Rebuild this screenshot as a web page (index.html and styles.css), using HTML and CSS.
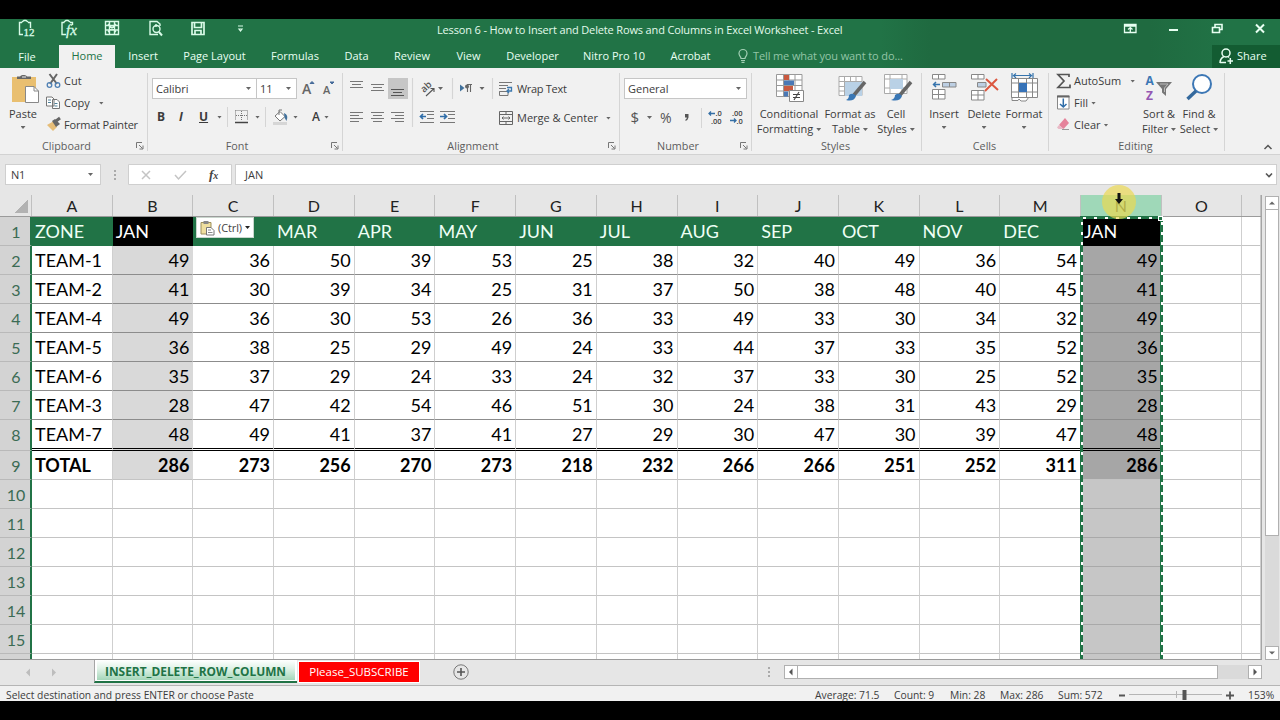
FILE: index.html
```html
<!DOCTYPE html>
<html lang="en">
<head>
<meta charset="utf-8">
<title>Lesson 6 - How to Insert and Delete Rows and Columns in Excel Worksheet - Excel</title>
<link rel="stylesheet" href="styles.css">
</head>
<body>
<div class="app">
  <header class="titlebar">
    <svg class="quick" viewBox="0 19 260 26" width="260" height="26" fill="none" stroke="#d9fbe8" stroke-width="1.4">
      <path d="M22 22.5H19.5V34.5H23M28 22.500H30.500V28M22 22L24 20.500H26L28 22"/>
      <text x="23.500" y="36" class="glyph">12</text>
      <path d="M64.500 22.500H62V34.500H66M70 22.500H72.500V25M64 22L66 20.500H68L70 22"/>
      <text x="66" y="34.500" class="glyph fx">fx</text>
      <path d="M105.500 21.500H118.500V34.500H105.500ZM105 25.500H119M105 30H119M109.500 21V35M114.500 21V35M108 24L116 32M116 24L108 32"/>
      <path d="M158 34.500H150V21.500H157L160 24V26M156 24V27"/><circle cx="156.500" cy="29" r="3.500"/><path d="M159 32L162 35.500" stroke-width="2"/>
      <path d="M192 22.500H204V34.500H192ZM194.500 23V27.500H201.500V23M195 34V30.500H201V34" stroke-width="1.700"/>
      <path d="M238 26H243M239 29H242L240.500 31Z" stroke-width="1.200"/>
    </svg>
    <div class="title"><span>Lesson 6 - How to Insert and Delete Rows and Columns in Excel Worksheet - Excel</span></div>
    <svg class="winctl" viewBox="1110 19 170 26" width="170" height="26" fill="none" stroke="#e8fff2" stroke-width="1.300">
      <path d="M1124.500 24.500H1136V32.500H1124.500ZM1124 26H1136M1130.300 32V27.500M1128 29.500L1130.300 27.500L1132.500 29.500"/>
      <path d="M1169 30H1178" stroke-width="2"/>
      <path d="M1212.500 27.500H1219.500V32.500H1212.500ZM1215 27V24.500H1222V29.500H1220" stroke-width="1.600"/>
      <path d="M1256 24.500L1264 32.500M1264 24.500L1256 32.500" stroke-width="2"/>
    </svg>
  </header>
  <nav class="tabs">
    <span class="tab t-file">File</span><span class="tab t-home">Home</span><span class="tab t-insert">Insert</span><span class="tab t-page">Page Layout</span><span class="tab t-formulas">Formulas</span><span class="tab t-data">Data</span><span class="tab t-review">Review</span><span class="tab t-view">View</span><span class="tab t-dev">Developer</span><span class="tab t-nitro">Nitro Pro 10</span><span class="tab t-acro">Acrobat</span>
    <span class="tell"><svg viewBox="736 48 14 16" width="14" height="16" fill="none" stroke="#a3d0b5" stroke-width="1.200"><path d="M741 58.500C741 56.500 739 56 739 53.500A4 4 0 0 1 747 53.500C747 56 745 56.500 745 58.500ZM741 60.500H745M741.500 62.300H744.500"/></svg><span>Tell me what you want to do...</span></span>
    <span class="share"><svg viewBox="1218 47 18 18" width="18" height="18" fill="none" stroke="#e8fff2" stroke-width="1.500"><circle cx="1226" cy="53" r="4"/><path d="M1220 63C1220 59.500 1222 57.500 1224 56.500M1228 56.500L1229 57.500M1220 62.500H1226M1227.500 61H1233M1230.300 58V64"/></svg><span>Share</span></span>
  </nav>

  <section class="ribbon">
    <div class="group g-clip">
      <div class="body clip">
        <div class="big"><svg viewBox="0 70 46 35" width="46" height="35"><path d="M12 77H36V102H12Z" fill="#e9bf70"/><path d="M17 79V76.500H20Q21 74.500 23.500 75Q26 74.500 27 76.500H31V79Z" fill="#666"/><path d="M22 77H26" stroke="#eee"/><path d="M25.500 86.500H34L38.500 91V102.500H25.500Z" fill="#fff" stroke="#888"/><path d="M34 86.500V91H38.500" fill="none" stroke="#888"/></svg><span>Paste</span><i class="caret"></i></div>
        <div class="stack">
          <div class="row"><svg viewBox="46 72 16 18" width="16" height="18" fill="none"><path d="M49.500 74L57 84M57 74L50 84" stroke="#666" stroke-width="2"/><circle cx="49.500" cy="85" r="2.300" stroke="#4f81b5" stroke-width="1.300"/><circle cx="57.500" cy="85" r="2.300" stroke="#4f81b5" stroke-width="1.300"/></svg><span>Cut</span></div>
          <div class="row"><svg viewBox="46 94 16 18" width="16" height="18" fill="#fff" stroke="#777"><path d="M46.500 97H52L54 99V106H46.500ZM52.500 99.500H57L59.500 102V108.500H52.500Z"/><path d="M48 100H51M48 102.500H51M54.500 103.500H57.500M54.500 106H57.500" stroke="#4f8199"/></svg><span>Copy</span><i class="caret ml12"></i></div>
          <div class="row"><svg viewBox="46 116 16 18" width="16" height="18"><path d="M47 125L53 121.500L57 127L53 131Z" fill="#e6bd78"/><path d="M52 121L55 119L60 124L56 127Z" fill="#666"/><path d="M56 121L60 118" stroke="#666" stroke-width="3"/></svg><span class="w-fp">Format Painter</span></div>
        </div>
      </div>
      <div class="label"><span class="l-clip">Clipboard</span><svg class="launch" viewBox="0 0 8 8" width="8" height="8"><path d="M.5 6V.5H6M3 3L6.500 6.500M7 3.500V7H3.500" fill="none" stroke="#777"/></svg></div>
    </div>

    <div class="group g-font">
      <div class="body">
        <div class="fontrow1"><div class="combo"><span>Calibri</span><i class="caret"></i></div><div class="combo size"><span>11</span><i class="caret"></i></div><svg viewBox="297 78 46 20" width="46" height="20"><text x="302" y="94" class="bigA">A</text><path d="M310 83.500L312 81.500L314 83.500Z" fill="#456a99" stroke="#456a99"/><text x="323" y="94" class="smA">A</text><path d="M330 82L332 84L334 82Z" fill="#456a99" stroke="#456a99"/></svg></div>
        <div class="fontrow2"><b>B</b><b class="it">I</b><b class="un">U</b><i class="caret"></i><i class="vsep"></i>
          <svg viewBox="236 109 16 18" width="16" height="18" fill="none" stroke="#777"><path d="M237.500 111.500H249.500V121M237.500 111.500V121M243.500 112V121M238 116.500H249" stroke-dasharray="1 1"/><path d="M237 123.500H250" stroke="#444" stroke-width="1.500"/></svg><i class="caret"></i><i class="vsep"></i>
          <svg viewBox="276 108 17 18" width="17" height="18"><path d="M279 116L284 111.500L289 116.500L284 121Z" fill="#fff" stroke="#777"/><path d="M283 115V110H286" fill="none" stroke="#777"/><path d="M288 113Q293 115 290.500 121Q288 118 288 113" fill="#41719c"/><path d="M277 123.500H291" stroke="#d6d6d6" stroke-width="3"/></svg><i class="caret"></i><span class="fa">A</span><i class="caret"></i></div>
      </div>
      <div class="label"><span class="l-font">Font</span><svg class="launch" viewBox="0 0 8 8" width="8" height="8"><path d="M.5 6V.5H6M3 3L6.500 6.500M7 3.500V7H3.500" fill="none" stroke="#777"/></svg></div>
    </div>

    <div class="group g-align">
      <div class="body">
        <div class="alignrow">
          <svg viewBox="343 76 172 54" width="172" height="54" fill="none" stroke="#777" stroke-width="1.100">
            <rect x="388" y="78" width="20" height="21" fill="#c6c6c6" stroke="none"/>
            <path d="M350 81.500H363M352 84.500H361M350 87.500H363M371 84.500H384M373 87.500H382M371 90.500H384"/><path d="M391 89.500H404M393 92.500H402M391 95.500H404" stroke="#555"/>
            <path d="M350 112.500H363M350 115.500H359M350 118.500H363M350 121.500H359M371 112.500H384M373 115.500H382M371 118.500H384M373 121.500H382M391 112.500H404M395 115.500H404M391 118.500H404M395 121.500H404"/>
            <path d="M412.500 78V127M452.500 78V99M492.500 78V99" stroke="#d5d5d5"/>
            <text x="0" y="0" class="ab" transform="translate(424 93) rotate(-42)">ab</text><path d="M426 96L434 88.500M430.500 88.500H434V92" stroke="#555"/>
            <path d="M460 84.500L464.500 88L460 91.500Z" fill="#41719c" stroke="none"/><path d="M467 84.500H472M467.500 92V84.500M470.500 92V84.500" stroke="#666"/><circle cx="467" cy="86.500" r="2" fill="#666" stroke="none"/>
            <path d="M438 87H443L440.500 90ZM479.500 87H484.500L482 90Z" fill="#666" stroke="none"/>
            <path d="M420 111.500H434M427 114.500H434M427 118.500H434M420 122.500H434M440 111.500H455M448 114.500H455M448 118.500H455M440 122.500H455"/>
            <path d="M426 116.500H420M423 114L420.500 116.500L423 119M440 116.500H446.500M444 114L446.500 116.500L444 119" stroke="#2f6da8" stroke-width="1.700"/>
          </svg>
          <div class="wrapcol">
            <div class="row2"><svg viewBox="498 79 16 18" width="16" height="18" fill="none" stroke="#777"><path d="M499 81.500H512M499 84.500H508M499 87.500H506M499.500 90.500H505M499.500 94.500H508V90.500H499.500Z"/><path d="M507 86.500H511.500V90H507M509 88L507 90L509 92" stroke="#3c78ae" stroke-width="1.300"/></svg><span class="w-wrap">Wrap Text</span></div>
            <div class="row2"><svg viewBox="498 108 16 18" width="16" height="18" fill="none" stroke="#666"><path d="M499.500 110.500H512.500V123.500H499.500ZM499 113.500H513M499 120.500H513M506 110V113M506 120V124M502 117H510M503.500 115.500L502 117L503.500 118.500M508.500 115.500L510 117L508.500 118.500"/></svg><span>Merge &amp; Center</span><i class="caret ml6"></i></div>
          </div>
        </div>
      </div>
      <div class="label"><span class="l-align">Alignment</span><svg class="launch" viewBox="0 0 8 8" width="8" height="8"><path d="M.5 6V.5H6M3 3L6.500 6.500M7 3.500V7H3.500" fill="none" stroke="#777"/></svg></div>
    </div>

    <div class="group g-num">
      <div class="body">
        <div class="combo general"><span>General</span><i class="caret"></i></div>
        <svg class="numrow" viewBox="620 106 130 24" width="130" height="24"><text x="630.500" y="123" class="sym">$</text><path d="M647 116H652L649.500 119Z" fill="#666"/><text x="660" y="123" class="sym pc">%</text><path d="M685 114H688.500V117.500Q688 120 685.500 121V119.500Q687 119 686.800 117.500H685Z" fill="#555"/><path d="M701.500 108V128" stroke="#d5d5d5"/><text x="715.500" y="115.500" class="dec">.0</text><text x="711" y="123.500" class="dec">.00</text><text x="732" y="115.500" class="dec">.00</text><text x="736.500" y="123.500" class="dec">.0</text><path d="M715 113.500H709M711 111.500L709 113.500L711 115.500M730 120.500H736M734 118.500L736 120.500L734 122.500" fill="none" stroke="#356fa5" stroke-width="1.300"/></svg>
      </div>
      <div class="label"><span class="l-num">Number</span><svg class="launch" viewBox="0 0 8 8" width="8" height="8"><path d="M.5 6V.5H6M3 3L6.500 6.500M7 3.500V7H3.500" fill="none" stroke="#777"/></svg></div>
    </div>

    <div class="group g-styles">
      <div class="body bigs">
        <div class="big w74"><svg viewBox="769 71 40 34" width="40" height="34"><path d="M776.500 75.500H802V97.500H776.500ZM776 81H802M776 86.500H802M776 92H802M783.500 75V98M789 75V98M795 75V98" fill="#fff" stroke="#999"/><path d="M784 76H789V81H784ZM784 87H793V92H784Z" fill="#c9593f"/><path d="M784 81.500H794V86H784ZM784 92.500H788V97.500H784Z" fill="#4a78b5"/><path d="M789.500 91.500H803.500V102.500H789.500Z" fill="#fff" stroke="#888"/><path d="M793 95.500H800M793 98.500H800M799 93L794 101" stroke="#444" stroke-width="1.100"/></svg><span>Conditional</span><span class="two">Formatting<i class="caret"></i></span></div>
        <div class="big w48"><svg viewBox="829 71 40 34" width="40" height="34"><path d="M838 77.500H861V96.500H838ZM838 82.500H861M838 87.500H861M838 92H861M843.500 77V97M849.500 77V97M855 77V97" fill="#fff" stroke="#aaa"/><path d="M844 83H861V97H844Z" fill="#b9d1e6"/><path d="M864 83L853 96" stroke="#666" stroke-width="3.500"/><path d="M845 101Q848 100 848 96Q852 93 855 97Q853 103 845 101" fill="#3977b5"/></svg><span>Format as</span><span class="two">Table<i class="caret"></i></span></div>
        <div class="big w44"><svg viewBox="876 71 40 34" width="40" height="34"><path d="M884.500 75.500H907V94.500H884.500ZM884 80H907M884 89H907M890 75V95M902 75V95" fill="#fff" stroke="#aaa"/><path d="M890 80H903V90H890Z" fill="#b9d1e6"/><path d="M911 83L900 96" stroke="#666" stroke-width="3.500"/><path d="M891 101Q895 100 895 96Q899 93 902 97Q900 103 891 101" fill="#3977b5"/></svg><span>Cell</span><span class="two">Styles<i class="caret"></i></span></div>
      </div>
      <div class="label"><span class="l-styles">Styles</span></div>
    </div>

    <div class="group g-cells">
      <div class="body bigs">
        <div class="big w44"><svg viewBox="925 71 40 34" width="40" height="34" fill="#fff" stroke="#888"><path d="M933.500 75.500H946V80H933.500ZM939.500 75V80M933.500 90.500H946V100H933.500ZM933.500 95.500H946M939.500 90V100"/><path d="M943.500 83.500H957V88H943.500ZM950.500 83V88" fill="#bdcfe3"/><path d="M941 85.500H934.500M937 83L934.500 85.500L937 88" fill="none" stroke="#3674ad" stroke-width="1.500"/></svg><span>Insert</span><i class="caret"></i></div>
        <div class="big w36"><svg viewBox="964 71 40 34" width="40" height="34" fill="#fff" stroke="#888"><path d="M971.500 75.500H984V80H971.500ZM978 75V80M971.500 91.500H984V101H971.500ZM971.500 96H984M978 91V101"/><path d="M977.500 83.500H986V88H977.500Z" fill="#bdcfe3"/><path d="M986 80L998 91M997 80L985 92" stroke="#dc5740" stroke-width="2"/></svg><span>Delete</span><i class="caret"></i></div>
        <div class="big w44"><svg viewBox="1003 71 40 34" width="40" height="34" fill="#fff" stroke="#888"><path d="M1010.500 79.500H1036.500V98.500H1010.500ZM1010 84H1037M1010 93H1037M1017.500 79V99M1025.500 79V99M1031.500 79V99M1011 98V101.500H1017L1018 100L1020 102H1025L1028 98"/><path d="M1018 84H1026V93H1018Z" fill="#3773b8" stroke="none"/><path d="M1011 74V79M1032 74V79M1012.500 76.500H1030.500M1015 74.500L1012.500 76.500L1015 79M1028 74.500L1030.500 76.500L1028 79" fill="none" stroke="#3674ad" stroke-width="1.200"/></svg><span>Format</span><i class="caret"></i></div>
      </div>
      <div class="label"><span class="l-cells">Cells</span></div>
    </div>

    <div class="group g-edit">
      <div class="body editing">
        <div class="stack">
          <div class="row"><svg viewBox="1056 72 16 18" width="16" height="18"><path d="M1069 77V74.500H1058L1064 81L1058 87.500H1070V84.500" fill="none" stroke="#555" stroke-width="1.700"/></svg><span>AutoSum</span><i class="caret ml9"></i></div>
          <div class="row"><svg viewBox="1056 94 16 18" width="16" height="18"><path d="M1057.500 96H1069V109H1057.500Z" fill="#fff" stroke="#888"/><path d="M1057 96.500H1069.500" stroke="#666" stroke-width="2"/><path d="M1063.300 98.500V107M1060 104L1063.300 107L1066.500 104" fill="none" stroke="#2f6da8" stroke-width="1.500"/></svg><span>Fill</span><i class="caret ml3"></i></div>
          <div class="row"><svg viewBox="1056 116 16 18" width="16" height="18"><path d="M1059 125L1065 118L1069 123L1063.500 129Z" fill="#e5839b"/><path d="M1059 125L1063.500 129H1058.500L1057 127.500Z" fill="#e9b9c6"/><path d="M1062 129.500H1069" stroke="#999"/></svg><span>Clear</span><i class="caret ml3"></i></div>
        </div>
        <div class="big w40"><svg viewBox="1139 71 40 34" width="40" height="34"><text x="1145.500" y="86" class="az az-a">A</text><text x="1146" y="100.500" class="az az-z">Z</text><path d="M1156 83H1172L1166 90V97L1162 93.500V90Z" fill="#777"/><path d="M1160 85H1168L1164.500 89V93" fill="none" stroke="#bbb"/></svg><span>Sort &amp;</span><span class="two">Filter<i class="caret"></i></span></div>
        <div class="big w40"><svg viewBox="1179 71 40 34" width="40" height="34"><circle cx="1202" cy="85" r="9" fill="#fff" stroke="#3c77b5" stroke-width="2"/><path d="M1196 92L1187.500 100" stroke="#34699d" stroke-width="3.500"/></svg><span>Find &amp;</span><span class="two">Select<i class="caret"></i></span></div>
      </div>
      <div class="label"><span class="l-edit">Editing</span></div>
    </div>
    <div class="collapse"><svg viewBox="0 0 10 8" width="10" height="8"><path d="M1.500 6L5 2.500L8.500 6" fill="none" stroke="#555" stroke-width="1.500"/></svg></div>
  </section>

  <section class="formula">
    <div class="namebox"><span>N1</span><i class="caret"></i></div>
    <svg class="dots" viewBox="0 0 4 14" width="4" height="14" fill="#aaa"><path d="M1 2h2v2H1zM1 6h2v2H1zM1 10h2v2H1z"/></svg>
    <svg class="fxbox" viewBox="128 164 104 21" width="104" height="21"><path d="M128.500 164.500H231.500V184.500H128.500Z" fill="#fff" stroke="#cfcfcf"/><path d="M142 171L150 179M150 171L142 179M175 175L178.500 179L186 171" fill="none" stroke="#c4c4c4" stroke-width="1.500"/><text x="209" y="179" class="fxt">f<tspan class="fxs">x</tspan></text></svg>
    <div class="input"><span>JAN</span><svg viewBox="0 0 8 6" width="8" height="6"><path d="M1 1.500L4 4.500L7 1.500" fill="none" stroke="#555" stroke-width="1.600"/></svg></div>
  </section>

  <main class="sheetarea">
    <div class="sheet" id="sheet">
      <div class="edge left"></div><div class="edge right"></div><div class="edge top"></div><div class="handle"></div>
      <div class="paste"><svg viewBox="0 0 15 16" width="15" height="16"><path d="M1 2.500H11V14H1Z" fill="#efdf9f" stroke="#9c8f5c"/><path d="M3.500 1H8.500V4H3.500Z" fill="#888"/><path d="M6.500 7.500H11L14 10.500V15H6.500Z" fill="#fff" stroke="#777"/><path d="M8 10H11M8 12.500H12.500" stroke="#888"/></svg><span>(Ctrl)</span><i class="caret dark"></i></div>
      <div class="halo"></div>
      <svg class="cursor" viewBox="0 0 10 13" width="10" height="13"><path d="M3.500 0H6.500V6H9L5 11L1 6H3.500Z" fill="#111"/></svg>
    </div>
    <div class="vscroll"><div class="sbtn"><svg viewBox="0 0 8 8" width="8" height="8"><path d="M1 5.500L4 2.500L7 5.500Z" fill="#666"/></svg></div><div class="vthumb"></div><div class="vtrack"></div><div class="sbtn"><svg viewBox="0 0 8 8" width="8" height="8"><path d="M1 2.500L4 5.500L7 2.500Z" fill="#666"/></svg></div></div>
  </main>

  <section class="sheetbar">
    <svg class="nav" viewBox="0 659 94 26" width="94" height="26" fill="#bdbdbd"><path d="M30 667.500V675.500L26 671.500ZM52 667.500V675.500L56 671.500Z"/></svg>
    <div class="stab active"><span>INSERT_DELETE_ROW_COLUMN</span></div>
    <div class="stab red"><span>Please_SUBSCRIBE</span></div>
    <svg class="add" viewBox="0 0 18 18" width="18" height="18" fill="none" stroke="#777"><circle cx="9" cy="9" r="7.200"/><path d="M5 9H13M9 5V13" stroke="#555" stroke-width="1.600"/></svg>
    <svg class="hdots" viewBox="0 0 4 14" width="4" height="14" fill="#aaa"><path d="M1 2h2v2H1zM1 6h2v2H1zM1 10h2v2H1z"/></svg>
    <div class="hscroll"><div class="sbtn"><svg viewBox="0 0 8 8" width="8" height="8"><path d="M5.500 .5L2 4L5.500 7.500Z" fill="#555"/></svg></div><div class="hthumb"></div><div class="htrack"></div><div class="sbtn"><svg viewBox="0 0 8 8" width="8" height="8"><path d="M2.500 .5L6 4L2.500 7.500Z" fill="#555"/></svg></div></div>
  </section>

  <footer class="status">
    <span class="s-msg">Select destination and press ENTER or choose Paste</span>
    <span class="s-avg">Average: 71.5</span><span class="s-count">Count: 9</span><span class="s-min">Min: 28</span><span class="s-max">Max: 286</span><span class="s-sum">Sum: 572</span>
    <svg viewBox="1115 686 122 15" width="122" height="15" fill="none"><path d="M1119 695.500H1125" stroke="#555" stroke-width="2"/><path d="M1129 694.500H1222M1176.500 691V698" stroke="#b5b5b5"/><path d="M1184.500 690V700" stroke="#555" stroke-width="4"/><path d="M1226 695.500H1234M1230 691.500V699.500" stroke="#555" stroke-width="1.800"/></svg>
    <span class="s-zoom">153%</span>
  </footer>
</div>
<script src="script.js"></script>
</body>
</html>
```
FILE: styles.css
```css
* { box-sizing: border-box; }
body { margin: 0; background: #000; font: 11px/16px "Open Sans", "Noto Sans", sans-serif; color: #3c3c3c; }
svg { display: block; flex: none; }
.app { width: 1280px; height: 720px; padding-top: 19px; overflow: hidden; white-space: nowrap; }

.titlebar { display: flex; height: 26px; background: linear-gradient(90deg, #217346 0 880px, #1f6a40 930px 1150px, #217346 1230px); }
.glyph { font: 11px "Liberation Serif", serif; fill: #d9fbe8; stroke: #d9fbe8; stroke-width: .3; }
.glyph.fx { font-size: 15px; font-style: italic; }
.title { width: 850px; padding: 3px 0 0 177px; color: #e3faec; letter-spacing: -.15px; }
.tabs { display: flex; height: 23px; background: linear-gradient(90deg, #217346 0 880px, #1f6a40 930px 1150px, #217346 1230px); color: #e8fff2; line-height: 22px; }
.tab { flex: none; text-align: center; }
.t-file { width: 59px; padding-right: 5px; padding-top: 1px; }
.t-home { width: 56px; background: #f1f1f1; color: #217346; }
.t-insert { width: 56px; }
.t-page { width: 87px; }
.t-formulas { width: 74px; }
.t-data { width: 49px; }
.t-review { width: 62px; }
.t-view { width: 51px; }
.t-dev { width: 77px; }
.t-nitro { width: 86px; }
.t-acro { width: 67px; }
.tell { display: flex; gap: 3px; width: 488px; padding: 3px 0 0 12px; color: #93c5a6; line-height: 16px; letter-spacing: -.12px; }
.share { display: flex; gap: 1px; width: 68px; padding: 2px 0 0 6px; background: #135c32; line-height: 18px; }

.ribbon { display: flex; height: 87px; background: #f1f1f1; border-bottom: 1px solid #d2d2d2; }
.group { display: flex; flex-direction: column; flex: none; background: linear-gradient(#d5d5d5, #d5d5d5) right 5px / 1px 78px no-repeat; }
.g-clip { width: 148px; }
.g-font { width: 195px; }
.g-align { width: 277px; }
.g-num { width: 132px; }
.g-styles { width: 170px; }
.g-cells { width: 127px; }
.g-edit { width: 176px; }
.body { height: 69px; }
.label { display: flex; justify-content: center; align-items: center; position: relative; height: 17px; color: #5d5d5d; font-size: 10.800px; }
.launch { position: absolute; right: 4px; top: 5px; }
.l-clip { margin-right: 15px; }
.l-font, .l-align { margin-right: 17px; }
.l-num { margin-right: 16px; }
.l-styles { margin-right: 3px; }
.l-cells { margin-right: 2px; }
.l-edit { margin-right: 3px; }
.caret { display: inline-block; flex: none; width: 5px; height: 3px; background: #666; clip-path: polygon(0 0, 100% 0, 50% 100%); }
.dark { background: #222; }
.clip, .bigs, .editing { display: flex; }
.stack { padding-top: 2px; }
.row { display: flex; align-items: center; gap: 2px; height: 22px; }
.w-fp { letter-spacing: -.2px; }
.w-wrap { letter-spacing: -.3px; }
.ml12 { margin-left: 7px; }
.ml9 { margin-left: 7px; }
.ml6 { margin-left: 5px; }
.ml3 { margin-left: 1px; }
.big { display: flex; flex-direction: column; align-items: center; flex: none; padding-top: 2px; line-height: 15px; }
.g-clip .big { width: 46px; }
.big > svg + span { margin-top: 2px; }
.g-clip .big > svg + span { margin-top: 1px; }
.big > .caret { margin-top: 5px; }
.two .caret { margin: 0 0 2px 3px; }
.w74 { width: 74px; }
.w48 { width: 48px; }
.w44 { width: 44px; }
.w40 { width: 40px; }
.w36 { width: 36px; }

.combo { display: flex; align-items: center; justify-content: space-between; width: 105px; height: 21px; padding: 0 5px 0 3px; border: 1px solid #c6c6c6; background: #fff; }
.combo.size { width: 41px; margin-left: -1px; }
.fontrow1 { display: flex; padding: 10px 0 0 4px; }
.fontrow2 { display: grid; grid-template-columns: 21px 21px 18px 10px 7px 21px 10px 7px 21px 14px 17px 8px; align-items: center; height: 20px; margin: 8px 0 0 9px; font-size: 13px; }
.fontrow2 b { font-size: 12px; }
.fontrow2 .fa { padding-left: 5px; font-weight: 600; font-size: 12px; }
.fontrow2 .it { padding-left: 1px; }
.it { font-style: italic; }
.un { text-decoration: underline; }
.vsep { width: 1px; height: 20px; background: #d5d5d5; }
.bigA { font: 600 14px "Open Sans", sans-serif; fill: #666; }
.smA { font: 600 11px "Open Sans", sans-serif; fill: #666; }
.alignrow { display: flex; padding-top: 8px; }
.wrapcol { margin-left: -17px; }
.row2 { display: flex; align-items: center; gap: 3px; height: 26px; }
.row2 + .row2 { margin-top: 3px; }
.ab { font: 600 9.500px "Open Sans", sans-serif; fill: #555; stroke: none; }
.general { width: 123px; margin: 10px 0 0 4px; }
.numrow { margin-top: 7px; }
.sym { font: 15px "Open Sans", sans-serif; fill: #555; }
.pc { font-size: 14px; }
.dec { font: 600 7.500px "Open Sans", sans-serif; fill: #444; }
.az { font: 700 12px "Open Sans", sans-serif; }
.az-a { fill: #3c77b5; }
.az-z { fill: #9457b3; }
.g-edit .stack { width: 90px; padding-left: 7px; }
.collapse { padding: 75px 0 0 38px; }

.formula { display: flex; align-items: flex-start; height: 40px; padding: 9px 0 0 5px; background: #e6e6e6; }
.namebox { display: flex; align-items: center; justify-content: space-between; width: 96px; height: 21px; padding: 0 7px 0 5px; border: 1px solid #cfcfcf; background: #fff; letter-spacing: -.2px; }
.dots { margin: 4px 11px 0 12px; }
.fxt { font: italic 700 13px "Liberation Serif", serif; fill: #444; }
.fxs { font-size: 10px; }
.input { display: flex; align-items: center; justify-content: space-between; width: 1042px; height: 21px; margin-left: 3px; padding: 0 3px 0 9px; border: 1px solid #cfcfcf; background: #fff; }

.sheetarea { display: flex; height: 465px; background: #e6e6e6; }
.sheet { position: relative; width: 1262px; height: 465px; border-right: 1px solid #a5a5a5; border-bottom: 1px solid #9a9a9a; font-family: Lato, sans-serif; font-size: 18px; color: #000; }
.cells { height: 464px; overflow: hidden; }
.r { display: grid; grid-template-columns: 32px repeat(15, 80.7px) 1fr; grid-template-rows: 100%; height: 29px; line-height: 29px; background: #fff; }
.c { border-right: 1px solid #cfcfcf; border-bottom: 1px solid #c4c4c4; padding: 0 3px; }
.num { text-align: right; }
.data .c { border-bottom-color: #8c8c8c; }
.data .c:nth-child(n+16) { border-bottom-color: #c4c4c4; }
.hdr .c:nth-child(-n+15) { background: #217346; border-color: #217346; color: #effff5; }
.total .c { font-weight: 700; border-bottom-color: #c4c4c4; }
.dbl { height: 31px; }
.dbl .c:nth-child(-n+15):not(.rh) { border-bottom: 3px double #000; }
.grey .c:nth-child(3) { background: #d9d9d9; border-right-color: #d9d9d9; }
.grey .c:nth-child(15) { background: #a6a6a6; }
.hdr .c:nth-child(3), .hdr .c:nth-child(15) { background: #000; border-color: #000; color: #fff; }
.blank .c:nth-child(15) { background: #c6c6c6; border-bottom-color: #a9a9a9; }
.r .c.rh { padding: 0 0 0 2px; text-align: center; background: #d3d3d3; color: #3b6b54; border-right: 2px solid #217346; border-bottom: 1px solid #b9b9b9; font-size: 16px; font-weight: 400; line-height: 30px; }
.heads { height: 22px; line-height: 22px; background: #e6e6e6; border-bottom: 1px solid #9b9b9b; font-size: 16px; color: #222; text-align: center; }
.heads .c { border-bottom: 0; border-right-color: #c0c0c0; }
.heads .c:nth-child(15) { background: #9fd8b8; color: #35543a; }
.heads .corner { background: linear-gradient(135deg, transparent 50%, #b2b2b2 50%) 14px 4px / 14px 14px no-repeat; }
.edge { position: absolute; }
.left, .right { top: 21px; height: 443px; width: 3px; background: repeating-linear-gradient(transparent 0 6px, #fff 6px 9px, transparent 9px 10px) center / 2px 100% no-repeat #217346; }
.left { left: 1080px; }
.right { left: 1160px; }
.top { left: 1080px; top: 21px; width: 83px; height: 3px; background: repeating-linear-gradient(90deg, transparent 0 3px, #fff 3px 6px, transparent 6px 11px) center / 100% 2px no-repeat #217346; }
.handle { position: absolute; left: 1158px; top: 21px; width: 5px; height: 5px; border: 1px solid #fff; background: #217346; }
.paste { position: absolute; left: 196px; top: 22px; display: flex; align-items: center; gap: 3px; width: 58px; height: 21px; padding-left: 3px; background: #fff; border: 1px solid #c9d6cd; color: #444; font: 11px "Open Sans", sans-serif; letter-spacing: -.1px; }
.halo { position: absolute; left: 1102px; top: -10px; width: 34px; height: 34px; border-radius: 50%; background: rgba(236, 216, 80, .68); }
.cursor { position: absolute; left: 1114px; top: -2px; }

.vscroll { display: flex; flex-direction: column; width: 14px; height: 465px; margin-left: 3px; padding-top: 1px; }
.sbtn { display: flex; align-items: center; justify-content: center; flex: none; width: 14px; height: 14px; border: 1px solid #b0b0b0; background: #fff; }
.vthumb { height: 326px; border: 1px solid #b0b0b0; border-top: 0; background: #fff; }
.vtrack { flex: 1; background: #dadada; }

.sheetbar { display: flex; height: 26px; background: #e6e6e6; border-bottom: 1px solid #b5b5b5; }
.stab { flex: none; text-align: center; }
.active { width: 203px; height: 23px; border-left: 1px solid #a5a5a5; border-bottom: 2px solid #217346; background: linear-gradient(#fff, #e0f2e7 40%, #9fd4b5); box-shadow: inset 2px 0 #fff, inset -2px -1px #fff; color: #217346; font-size: 11.900px; font-weight: 700; line-height: 23px; }
.active span { margin-right: 1px; }
.red { width: 122px; height: 22px; margin: 1px 0 0 1px; border: 1px solid #fff; background: #f00; color: #fff; font-size: 11.500px; line-height: 19px; }
.add { margin: 3px 0 0 32px; }
.hdots { margin: 5px 0 0 297px; }
.hscroll { display: flex; width: 478px; height: 14px; margin: 5px 0 0 13px; }
.hthumb { width: 420px; border: 1px solid #b0b0b0; border-left: 0; background: #fff; }
.htrack { flex: 1; background: #dadada; }

.status { display: flex; height: 15px; padding-left: 6px; background: #f1f1f1; overflow: hidden; font-size: 10.300px; line-height: 18px; }
.status span { flex: none; }
.s-msg { width: 809px; }
.s-avg { width: 79px; }
.s-count { width: 56px; }
.s-min { width: 50px; }
.s-max { width: 58px; }
.s-sum { width: 57px; }
.s-zoom { margin-left: 11px; }
```
FILE: script.js
```js
const columns = "ABCDEFGHIJKLMNO".split("");
const rows = [
  ["ZONE", "JAN", "", "MAR", "APR", "MAY", "JUN", "JUL", "AUG", "SEP", "OCT", "NOV", "DEC", "JAN"],
  ["TEAM-1", 49, 36, 50, 39, 53, 25, 38, 32, 40, 49, 36, 54, 49],
  ["TEAM-2", 41, 30, 39, 34, 25, 31, 37, 50, 38, 48, 40, 45, 41],
  ["TEAM-4", 49, 36, 30, 53, 26, 36, 33, 49, 33, 30, 34, 32, 49],
  ["TEAM-5", 36, 38, 25, 29, 49, 24, 33, 44, 37, 33, 35, 52, 36],
  ["TEAM-6", 35, 37, 29, 24, 33, 24, 32, 37, 33, 30, 25, 52, 35],
  ["TEAM-3", 28, 47, 42, 54, 46, 51, 30, 24, 38, 31, 43, 29, 28],
  ["TEAM-7", 48, 49, 41, 37, 41, 27, 29, 30, 47, 30, 39, 47, 48],
  ["TOTAL", 286, 273, 256, 270, 273, 218, 232, 266, 266, 251, 252, 311, 286]
];

function makeRow(className, head, headClass, values) {
  const row = document.createElement("div");
  row.className = "r " + className;
  const add = (text, cls) => {
    const cell = document.createElement("div");
    cell.className = "c " + cls;
    cell.textContent = text;
    row.appendChild(cell);
  };
  add(head, headClass);
  for (let i = 0; i < 16; i++) {
    const value = values[i] === undefined ? "" : values[i];
    add(value, typeof value === "number" ? "num" : "");
  }
  return row;
}

const sheet = document.getElementById("sheet");
const grid = document.createElement("div");
grid.className = "cells";
grid.appendChild(makeRow("heads", "", "corner", columns));
for (let n = 1; n <= 16; n++) {
  let cls = "blank";
  if (n <= 9) cls = "grey " + (n === 9 ? "total" : "data");
  if (n === 1) cls += " hdr";
  if (n === 8) cls += " dbl";
  grid.appendChild(makeRow(cls, n < 16 ? n : "", "rh", rows[n - 1] || []));
}
sheet.prepend(grid);
```
